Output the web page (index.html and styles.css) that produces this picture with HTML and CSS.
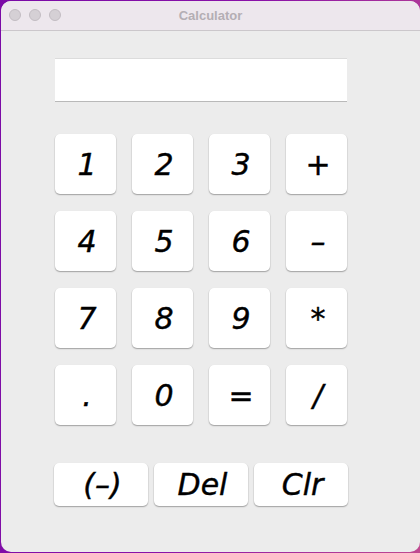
FILE: index.html
```html
<!DOCTYPE html>
<html>
<head>
<meta charset="utf-8">
<link rel="stylesheet" href="styles.css">
</head>
<body>
<div class="window">
  <div class="titlebar">
    <div class="lights"><span class="light"></span><span class="light"></span><span class="light"></span></div>
    <div class="title">Calculator</div>
  </div>
  <div class="content">
    <div class="display"></div>
    <div class="keys">
      <div class="key">1</div><div class="key">2</div><div class="key">3</div><div class="key">+</div>
      <div class="key">4</div><div class="key">5</div><div class="key">6</div><div class="key">–</div>
      <div class="key">7</div><div class="key">8</div><div class="key">9</div><div class="key">*</div>
      <div class="key">.</div><div class="key">0</div><div class="key">=</div><div class="key">/</div>
    </div>
    <div class="actions">
      <div class="key wide">(–)</div><div class="key wide">Del</div><div class="key wide">Clr</div>
    </div>
  </div>
</div>
</body>
</html>
```

FILE: styles.css
```css
html, body { margin: 0; padding: 0; }
body {
  width: 420px;
  height: 553px;
  overflow: hidden;
  background: linear-gradient(100deg, #7a0aa6 0%, #8a12a8 50%, #c04a90 100%);
  font-family: "DejaVu Sans", sans-serif;
}
.window {
  margin: 1px 0 0 1px;
  width: 419px;
  height: 551px;
  border-radius: 10px;
  overflow: hidden;
  background: #ececec;
  display: flex;
  flex-direction: column;
}
.titlebar {
  height: 29px;
  background: #ede7ed;
  border-bottom: 1px solid #cbc7cb;
  position: relative;
  display: flex;
  align-items: center;
  justify-content: center;
}
.lights {
  position: absolute;
  left: 8px;
  top: 8px;
  display: flex;
  gap: 8px;
}
.light {
  width: 12px;
  height: 12px;
  box-sizing: border-box;
  border-radius: 50%;
  background: #d5d0d5;
  border: 1px solid #c2bcc2;
}
.title {
  font-family: "Liberation Sans", Arial, sans-serif;
  font-weight: bold;
  font-size: 13px;
  color: #b4aeb4;
  margin-top: -1px;
}
.content {
  padding: 27px 0 0 54px;
}
.display {
  width: 292px;
  height: 42px;
  background: #fff;
  border-top: 1px solid #dcdcdc;
  border-bottom: 1px solid #b9b9b9;
  box-sizing: content-box;
}
.keys {
  margin-top: 32px;
  display: grid;
  grid-template-columns: repeat(4, 61px);
  grid-auto-rows: 60px;
  column-gap: 16px;
  row-gap: 17px;
}
.key {
  background: #fff;
  border-radius: 5px;
  box-shadow: 0 0.5px 0 0.5px rgba(0,0,0,0.06), 0 1px 1.5px rgba(0,0,0,0.28);
  display: flex;
  align-items: center;
  justify-content: center;
  font-style: italic;
  font-size: 30px;
  color: #000;
  -webkit-text-stroke: 0.4px #000;
  padding-left: 3px;
  box-sizing: border-box;
}
.actions {
  margin-top: 38px;
  margin-left: -1px;
  display: flex;
  gap: 6px;
}
.wide {
  width: 94px;
  height: 43px;
}
```
